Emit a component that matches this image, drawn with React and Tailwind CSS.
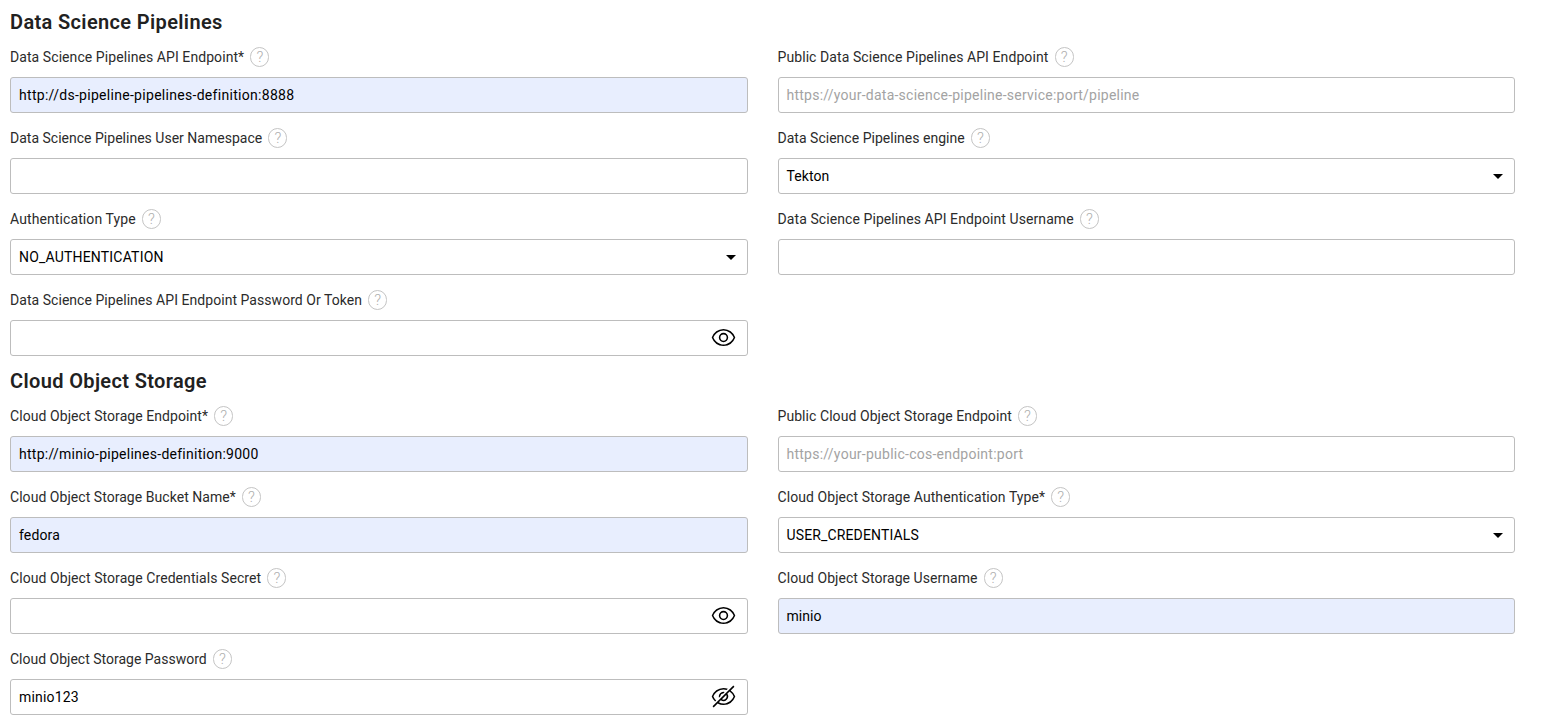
function HelpIcon() {
  return (
    <span className="flex h-5 w-[19px] shrink-0 items-center justify-center rounded-full border border-[#c4c4c4] text-[15px] leading-none font-light text-[#b0b0b0]">?</span>
  );
}

const EYE = 'M30.94 15.66A16.69 16.69 0 0 0 16 5 16.69 16.69 0 0 0 1.06 15.66a1 1 0 0 0 0 .68A16.69 16.69 0 0 0 16 27 16.69 16.69 0 0 0 30.94 16.34a1 1 0 0 0 0-.68ZM16 25c-5.3 0-10.9-3.93-12.93-9C5.1 10.93 10.7 7 16 7s10.9 3.93 12.93 9C26.9 21.07 21.3 25 16 25ZM16 10a6 6 0 1 0 6 6 6 6 0 0 0-6-6Zm0 10a4 4 0 1 1 4-4 4 4 0 0 1-4 4Z';
const EYE_OFF = 'M5.24 22.51l1.43-1.42A14.06 14.06 0 0 1 3.07 16C5.1 10.93 10.7 7 16 7a12.38 12.38 0 0 1 4 .72l1.55-1.56A14.72 14.72 0 0 0 16 5 16.69 16.69 0 0 0 1.06 15.66a1 1 0 0 0 0 .68 16 16 0 0 0 4.18 6.17ZM12 15.73a4 4 0 0 1 3.7-3.7l1.81-1.82a6 6 0 0 0-7.33 7.33ZM30.94 15.66A16.4 16.4 0 0 0 25.2 8.22L30 3.41 28.59 2 2 28.59 3.41 30l5.1-5.1A15.29 15.29 0 0 0 16 27 16.69 16.69 0 0 0 30.94 16.34a1 1 0 0 0 0-.68ZM20 16a4 4 0 0 1-6 3.44L19.44 14A4 4 0 0 1 20 16ZM16 25a13.05 13.05 0 0 1-6-1.58l2.54-2.54a6 6 0 0 0 8.35-8.35l2.87-2.87A14.54 14.54 0 0 1 28.93 16C26.9 21.07 21.3 25 16 25Z';

function Eye({ off }) {
  return (
    <svg className="mb-px h-[25px] w-[25px]" viewBox="0 0 32 32" fill="#000">
      <path d={off ? EYE_OFF : EYE} />
    </svg>
  );
}

function Field({ label, labelClass = '', value, valueClass = '', kind, filled, placeholder }) {
  return (
    <div>
      <div className="flex h-5 items-center gap-[6.2px] text-[14px] leading-5 text-[#2b2b2b]">
        <span className={`whitespace-nowrap ${labelClass}`}>{label}</span>
        <HelpIcon />
      </div>
      <div className={`mt-2.5 flex h-9 items-center justify-between rounded-[3px] border border-[#bdbdbd] pl-2 text-[14px] ${kind === 'select' ? 'pr-[11px]' : 'pr-[10.5px]'} ${filled ? 'bg-[#e8eefe]' : 'bg-white'} ${placeholder ? 'text-[#a3a3a3]' : 'text-black'}`}>
        <span className={`whitespace-nowrap ${valueClass}`}>{value}</span>
        {kind === 'select' && (
          <svg className="h-[5px] w-2.5" viewBox="0 0 10 5"><path d="M0 0H10L5 5Z" /></svg>
        )}
        {kind === 'eye' && <Eye />}
        {kind === 'eye-off' && <Eye off />}
      </div>
    </div>
  );
}

function Section({ title, titleClass, children }) {
  return (
    <section>
      <h2 className={`mb-[13px] h-6 text-[20px] leading-6 font-semibold text-[#212121] ${titleClass}`}>{title}</h2>
      <div className="grid grid-cols-2 gap-x-[30px] gap-y-[15px]">{children}</div>
    </section>
  );
}

export default function App() {
  return (
    <main className="flex h-[723px] w-[1515px] flex-col gap-[13px] overflow-hidden bg-white pt-2.5 pl-2.5 font-['Roboto',sans-serif]">
      <Section title="Data Science Pipelines" titleClass="tracking-[0.36px]">
        <Field label="Data Science Pipelines API Endpoint*" labelClass="tracking-[0.075px]" value="http://ds-pipeline-pipelines-definition:8888" valueClass="tracking-[0.295px]" filled />
        <Field label="Public Data Science Pipelines API Endpoint" labelClass="tracking-[0.08px]" value="https://your-data-science-pipeline-service:port/pipeline" valueClass="tracking-[0.24px]" placeholder />
        <Field label="Data Science Pipelines User Namespace" labelClass="tracking-[0.01px]" />
        <Field label="Data Science Pipelines engine" labelClass="tracking-[0.02px]" value="Tekton" valueClass="tracking-[0.08px]" kind="select" />
        <Field label="Authentication Type" labelClass="tracking-[0.1px]" value="NO_AUTHENTICATION" valueClass="tracking-[0.19px]" kind="select" />
        <Field label="Data Science Pipelines API Endpoint Username" labelClass="tracking-[0.085px]" />
        <Field label="Data Science Pipelines API Endpoint Password Or Token" labelClass="tracking-[0.045px]" kind="eye" />
      </Section>
      <Section title="Cloud Object Storage" titleClass="tracking-[0.36px]">
        <Field label="Cloud Object Storage Endpoint*" labelClass="tracking-[0.07px]" value="http://minio-pipelines-definition:9000" valueClass="tracking-[0.26px]" filled />
        <Field label="Public Cloud Object Storage Endpoint" labelClass="tracking-[0.065px]" value="https://your-public-cos-endpoint:port" valueClass="tracking-[0.25px]" placeholder />
        <Field label="Cloud Object Storage Bucket Name*" labelClass="tracking-[0.045px]" value="fedora" valueClass="tracking-[0.15px]" filled />
        <Field label="Cloud Object Storage Authentication Type*" labelClass="tracking-[0.07px]" value="USER_CREDENTIALS" valueClass="tracking-[0.14px]" kind="select" />
        <Field label="Cloud Object Storage Credentials Secret" labelClass="tracking-[0.07px]" kind="eye" />
        <Field label="Cloud Object Storage Username" labelClass="tracking-[0.06px]" value="minio" valueClass="tracking-[0.05px]" filled />
        <Field label="Cloud Object Storage Password" value="minio123" valueClass="tracking-[0.18px]" kind="eye-off" />
      </Section>
    </main>
  );
}
